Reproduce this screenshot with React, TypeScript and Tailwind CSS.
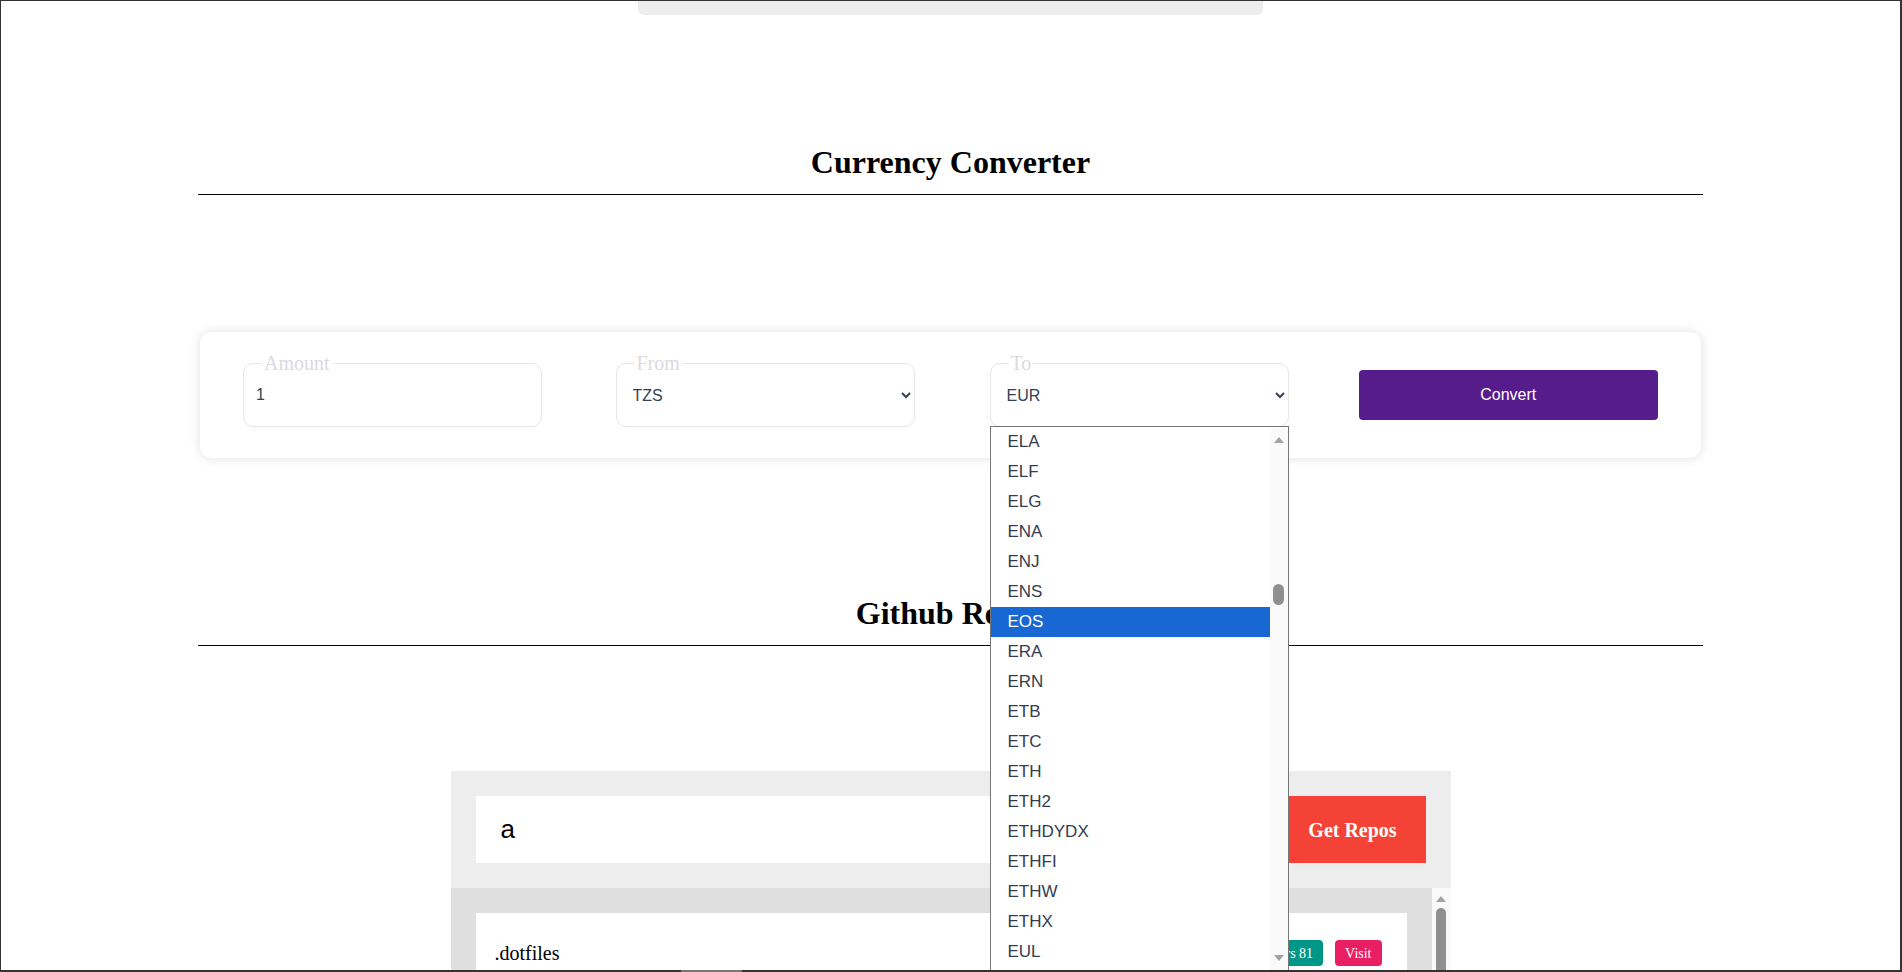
import React from 'react';

const CODES = [
  'ELA', 'ELF', 'ELG', 'ENA', 'ENJ', 'ENS', 'EOS', 'ERA', 'ERN', 'ETB',
  'ETC', 'ETH', 'ETH2', 'ETHDYDX', 'ETHFI', 'ETHW', 'ETHX', 'EUL', 'EUR',
];

const sans = 'font-["Liberation_Sans",Arial,sans-serif]';

function UpArrow() {
  return (
    <svg width="10" height="6" viewBox="0 0 10 6">
      <path d="M0 6 L5 0 L10 6 Z" fill="#a3a3a3" />
    </svg>
  );
}

function DownArrow() {
  return (
    <svg width="10" height="6" viewBox="0 0 10 6">
      <path d="M0 0 L5 6 L10 0 Z" fill="#a3a3a3" />
    </svg>
  );
}

function Field({ label, children }: { label: string; children: React.ReactNode }) {
  return (
    <fieldset className="w-[299px] border border-[#e5e5ea] rounded-[10px] pb-[11px]">
      <legend className="ml-[18px] px-[2px] text-[20px] leading-[23px] text-[#dadadf]">{label}</legend>
      {children}
    </fieldset>
  );
}

function CurrencyPopup() {
  return (
    <div className="absolute left-0 top-[calc(100%-1px)] w-full h-[549px] z-50 bg-white border border-[#767676] flex">
      <div className="flex-1 flex flex-col">
        {CODES.map((c) => (
          <div
            key={c}
            className={
              c === 'EOS'
                ? `h-[30px] shrink-0 flex items-center pl-[17px] text-[17px] bg-[#1967d2] text-white ${sans}`
                : `h-[30px] shrink-0 flex items-center pl-[17px] text-[17px] text-[#333d4f] ${sans}`
            }
          >
            {c}
          </div>
        ))}
      </div>
      <div className="w-[18px] bg-[#fafafa] flex flex-col items-center pt-[10px] pb-[13px]">
        <UpArrow />
        <div className="mt-[141px] w-[11px] h-[21px] rounded-full bg-[#8f8f8f]" />
        <div className="flex-1" />
        <DownArrow />
      </div>
    </div>
  );
}

export default function App() {
  return (
    <div className='h-[972px] w-full overflow-hidden bg-white flex flex-col border-t border-l border-r-2 border-[#333] font-["Liberation_Serif","Times_New_Roman",serif] text-black'>
      <div className="flex-1 overflow-hidden flex flex-col">
        {/* leftover of the section above */}
        <div className="mx-auto w-[625px] h-[14px] shrink-0 bg-[#ededed] rounded-b-[6px]" />

        <div className="w-[1505px] mx-auto shrink-0">
          <h1 className="mt-[129px] text-center text-[32px] leading-[36px] font-bold">Currency Converter</h1>
          <div className="mt-[14px] h-px bg-black" />

          <div className="mt-[137px] mx-[2px] bg-white rounded-[12px] shadow-[0_0_12px_rgba(0,0,0,0.12)] px-[43px] pt-[20px] pb-[31px] flex items-start">
            <Field label="Amount">
              <input
                defaultValue="1"
                className={`w-full h-[40px] px-3 text-[16px] text-[#334155] outline-none ${sans}`}
              />
            </Field>
            <div className="ml-[74px]">
              <Field label="From">
                <select
                  defaultValue="TZS"
                  className={`w-full h-[40px] pl-3 pr-[2px] text-[16px] text-[#334155] outline-none ${sans}`}
                >
                  <option>TZS</option>
                  <option>USD</option>
                </select>
              </Field>
            </div>
            <div className="relative ml-[75px] w-[299px]">
              <Field label="To">
                <select
                  defaultValue="EUR"
                  className={`w-full h-[40px] pl-3 pr-[2px] text-[16px] text-[#334155] outline-none ${sans}`}
                >
                  <option>EUR</option>
                  <option>USD</option>
                </select>
              </Field>
              <CurrencyPopup />
            </div>
            <button className={`ml-[70px] mt-[18px] w-[300px] h-[50px] rounded-[4px] bg-[#571c8b] text-white text-[16px] ${sans}`}>
              Convert
            </button>
          </div>

          <h2 className="mt-[137px] text-center text-[32px] leading-[36px] font-bold">Github Repos</h2>
          <div className="mt-[14px] h-px bg-black" />
        </div>

        <div className="mt-[125px] w-[1000px] mx-auto shrink-0 bg-[#ededed]">
          <div className="p-[25px] flex">
            <input
              defaultValue="a"
              className={`flex-1 h-[67px] bg-white pl-[25px] text-[26px] text-black outline-none ${sans}`}
            />
            <button className="w-[146px] h-[67px] bg-[#f44336] text-white text-[20px] font-bold">Get Repos</button>
          </div>
          <div className="flex bg-[#dfdfdf] h-[300px]">
            <div className="flex-1 p-[25px]">
              <div className="bg-white pl-[19px] pr-[25px] py-[25px] flex items-center justify-between">
                <span className="text-[20px]">.dotfiles</span>
                <div className="flex items-center gap-[12px]">
                  <span className="h-[26px] px-[10px] rounded-[4px] bg-[#009688] text-white text-[14px] flex items-center">Stars 81</span>
                  <span className="h-[26px] px-[10px] rounded-[4px] bg-[#e91e63] text-white text-[14px] flex items-center">Visit</span>
                </div>
              </div>
            </div>
            <div className="w-[19px] bg-[#fafafa] flex flex-col items-center pt-[8px]">
              <UpArrow />
              <div className="mt-[6px] w-[10px] h-[200px] rounded-full bg-[#8f8f8f]" />
            </div>
          </div>
        </div>
      </div>
      <div className="h-[2px] shrink-0 bg-[#333] flex">
        <div className="ml-[680px] w-[61px] bg-[#777]" />
      </div>
    </div>
  );
}
